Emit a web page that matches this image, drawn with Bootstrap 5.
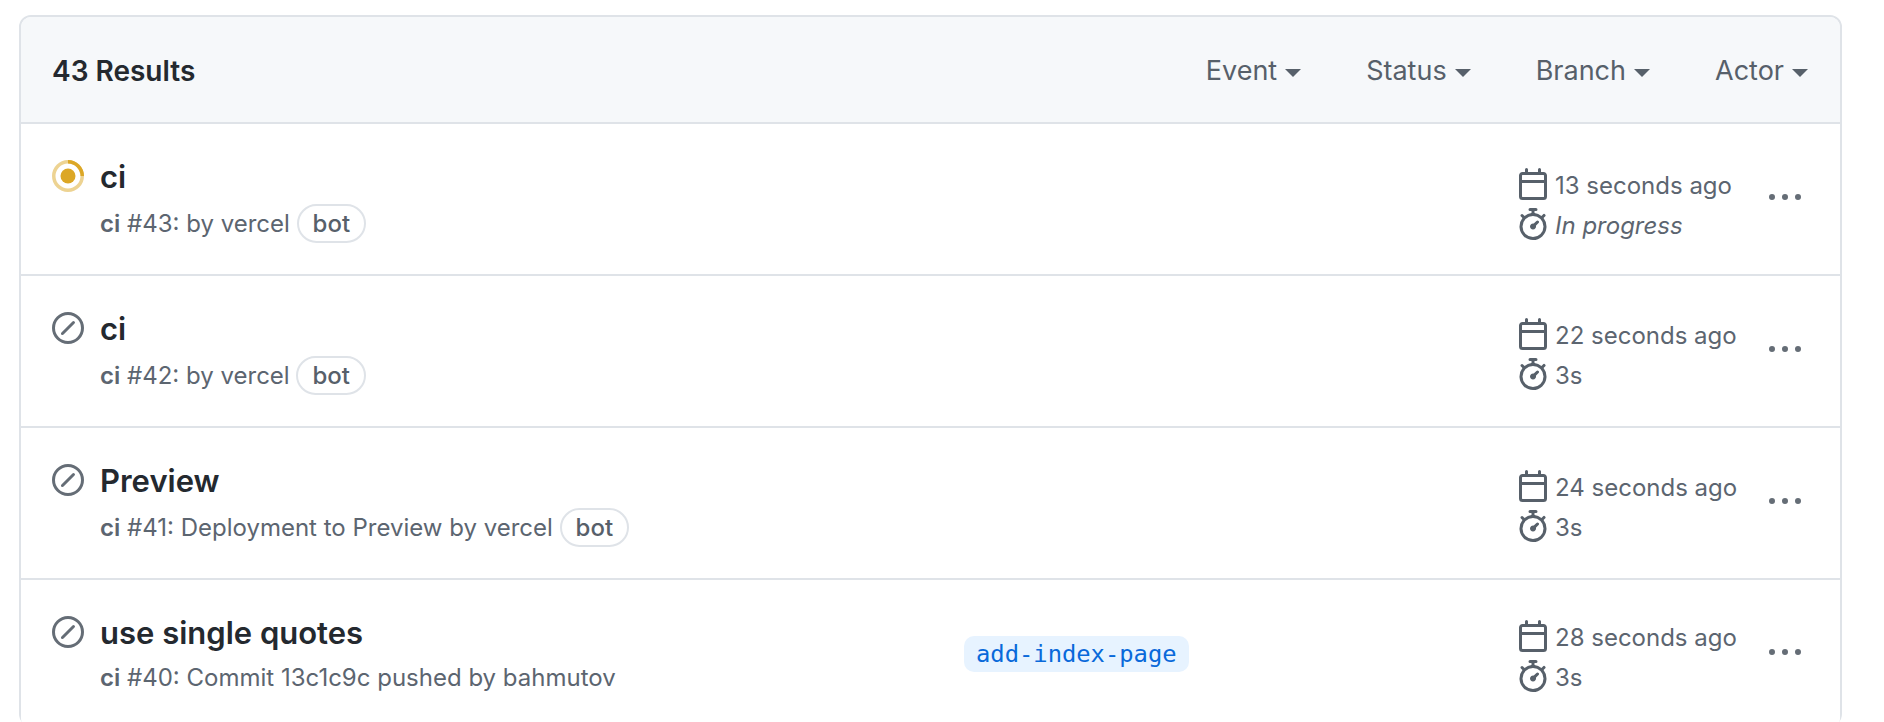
<!DOCTYPE html>
<html lang="en">
<head>
  <meta charset="UTF-8" />
  <title>Workflow runs</title>
  <link rel="stylesheet" href="https://cdn.jsdelivr.net/npm/bootstrap@5.3.0/dist/css/bootstrap.min.css"/>
  <style>
    body {
      background-color: #fff;
      font-family: Inter, "Liberation Sans", sans-serif;
      color: #24292f;
    }
    .runs-page {
      padding: 15px 42px 0 19px;
    }
    .runs-box {
      border: 2px solid #dfe3e8;
      border-radius: 12px;
    }
    .runs-head {
      height: 107px;
      padding: 3px 32px 0 31px;
      background-color: #f6f8fa;
      border-bottom: 2px solid #dfe3e8;
      border-radius: 10px 10px 0 0;
    }
    .runs-count {
      font-size: 28px;
      font-weight: 600;
    }
    .filter-list {
      gap: 65px;
    }
    .filter-item {
      font-size: 27px;
      color: #57606a;
      padding: 0;
      border: 0;
      background: none;
    }
    .filter-item::after {
      content: "";
      display: inline-block;
      margin-left: 8px;
      vertical-align: 3px;
      border-top: 8px solid #57606a;
      border-left: 8px solid transparent;
      border-right: 8px solid transparent;
    }
    .runs-box > .run-list {
      border-top: 0;
      --bs-list-group-border-width: 2px;
      --bs-list-group-border-color: #dfe3e8;
    }
    .run-row {
      padding: 28px 39px 20px 31px;
      min-height: 152px;
    }
    .run-row.no-tag {
      min-height: 144px;
    }
    .run-icon {
      width: 32px;
      height: 32px;
      flex: none;
      margin-top: 8px;
      fill: #656d76;
    }
    .run-main {
      flex: 1 1 0;
      margin-left: 16px;
    }
    .run-title {
      font-size: 31px;
      font-weight: 600;
      line-height: 50px;
      color: #24292f;
    }
    .run-sub {
      margin-top: 2px;
      font-size: 24px;
      line-height: 40px;
      color: #5c6570;
      white-space: nowrap;
    }
    .no-tag .run-sub {
      margin-top: 0;
    }
    .bot-tag {
      display: inline-block;
      margin-left: 0;
      padding: 0 14px;
      font-size: 24px;
      line-height: 35px;
      font-weight: 500;
      color: #57606a;
      border: 2px solid #dfe3e8;
      border-radius: 20px;
    }
    .branch-col {
      width: 553px;
      flex: none;
      margin-bottom: 4px;
    }
    .branch-tag {
      display: inline-block;
      font-family: "DejaVu Sans Mono", monospace;
      font-size: 23.8px;
      line-height: 36px;
      padding: 0 12px;
      color: #0969da;
      background-color: #e7f3ff;
      border-radius: 10px;
    }
    .time-col {
      width: 252px;
      flex: none;
      margin-top: 14px;
      font-size: 24px;
      color: #5c6570;
      gap: 8px;
    }
    .in-progress .time-col {
      margin-top: 16px;
    }
    .no-tag .time-col {
      margin-top: 12px;
    }
    .time-line {
      gap: 6px;
      height: 32px;
    }
    .time-line svg {
      width: 32px;
      height: 32px;
      fill: #57606a;
      flex: none;
    }
    .time-text {
      margin-top: 4px;
    }
    .kebab {
      width: 32px;
      height: 32px;
      margin-bottom: 11px;
      fill: #656d76;
      flex: none;
    }
    .no-tag .kebab {
      margin-bottom: 6px;
    }
  </style>
</head>
<body class="overflow-hidden">

<svg class="d-none">
  <symbol id="i-skip" viewBox="0 0 16 16"><path d="M8 0a8 8 0 1 1 0 16A8 8 0 0 1 8 0ZM1.5 8a6.5 6.5 0 1 0 13 0 6.5 6.5 0 0 0-13 0Zm9.78-2.22-5.5 5.5a.749.749 0 0 1-1.275-.326.749.749 0 0 1 .215-.734l5.5-5.5a.751.751 0 0 1 1.042.018.751.751 0 0 1 .018 1.042Z"/></symbol>
  <symbol id="i-cal" viewBox="0 0 16 16"><path d="M4.75 0a.75.75 0 0 1 .75.75V2h5V.75a.75.75 0 0 1 1.5 0V2h1.25c.966 0 1.75.784 1.75 1.75v10.5A1.75 1.75 0 0 1 13.25 16H2.75A1.75 1.75 0 0 1 1 14.25V3.75C1 2.784 1.784 2 2.75 2H4V.75A.75.75 0 0 1 4.75 0ZM2.5 7.5v6.75c0 .138.112.25.25.25h10.5a.25.25 0 0 0 .25-.25V7.5Zm10.75-4H2.75a.25.25 0 0 0-.25.25V6h11V3.75a.25.25 0 0 0-.25-.25Z"/></symbol>
  <symbol id="i-watch" viewBox="0 0 16 16"><path d="M5.75.75A.75.75 0 0 1 6.5 0h3a.75.75 0 0 1 0 1.5h-.75v1l-.001.041a6.724 6.724 0 0 1 3.464 1.435l.007-.006.75-.75a.75.75 0 1 1 1.06 1.06l-.75.75-.006.007a6.75 6.75 0 1 1-10.548 0L2.72 5.03l-.75-.75a.75.75 0 0 1 1.06-1.06l.75.75.007.006A6.72 6.72 0 0 1 7.25 2.541V1.5H6.5a.75.75 0 0 1-.75-.75ZM8 14.5a5.25 5.25 0 1 0-.001-10.501A5.25 5.25 0 0 0 8 14.5Zm.389-6.7 1.33-1.33a.75.75 0 1 1 1.061 1.06L9.45 8.861A1.503 1.503 0 0 1 8 10.75a1.499 1.499 0 1 1 .389-2.95Z"/></symbol>
  <symbol id="i-kebab" viewBox="0 0 16 16"><path d="M8 9a1.5 1.5 0 1 0 0-3 1.5 1.5 0 0 0 0 3ZM1.5 9a1.5 1.5 0 1 0 0-3 1.5 1.5 0 0 0 0 3Zm13 0a1.5 1.5 0 1 0 0-3 1.5 1.5 0 0 0 0 3Z"/></symbol>
</svg>

<div class="runs-page">
  <div class="card runs-box">
    <div class="runs-head d-flex align-items-center justify-content-between">
      <div class="runs-count">43 Results</div>
      <div class="filter-list d-flex">
        <button class="filter-item">Event</button>
        <button class="filter-item">Status</button>
        <button class="filter-item">Branch</button>
        <button class="filter-item">Actor</button>
      </div>
    </div>

    <div class="list-group list-group-flush run-list">
      <div class="list-group-item run-row in-progress d-flex align-items-start">
        <svg class="run-icon" viewBox="0 0 32 32">
          <circle cx="16" cy="16" r="14.25" fill="none" stroke="#dca726" stroke-opacity=".5" stroke-width="3.5"/>
          <path d="M16 1.75A14.25 14.25 0 0 1 30.25 16" fill="none" stroke="#dca726" stroke-width="3.5"/>
          <circle cx="16" cy="16" r="7.5" fill="#dca726"/>
        </svg>
        <div class="run-main">
          <div class="run-title">ci</div>
          <div class="run-sub"><b class="fw-semibold">ci</b> #43: by vercel <span class="bot-tag">bot</span></div>
        </div>
        <div class="branch-col"></div>
        <div class="time-col d-flex flex-column">
          <div class="time-line d-flex align-items-center"><svg><use href="#i-cal"/></svg><span class="time-text">13 seconds ago</span></div>
          <div class="time-line d-flex align-items-center"><svg><use href="#i-watch"/></svg><em class="time-text">In progress</em></div>
        </div>
        <svg class="kebab align-self-center"><use href="#i-kebab"/></svg>
      </div>

      <div class="list-group-item run-row d-flex align-items-start">
        <svg class="run-icon"><use href="#i-skip"/></svg>
        <div class="run-main">
          <div class="run-title">ci</div>
          <div class="run-sub"><b class="fw-semibold">ci</b> #42: by vercel <span class="bot-tag">bot</span></div>
        </div>
        <div class="branch-col"></div>
        <div class="time-col d-flex flex-column">
          <div class="time-line d-flex align-items-center"><svg><use href="#i-cal"/></svg><span class="time-text">22 seconds ago</span></div>
          <div class="time-line d-flex align-items-center"><svg><use href="#i-watch"/></svg><span class="time-text">3s</span></div>
        </div>
        <svg class="kebab align-self-center"><use href="#i-kebab"/></svg>
      </div>

      <div class="list-group-item run-row d-flex align-items-start">
        <svg class="run-icon"><use href="#i-skip"/></svg>
        <div class="run-main">
          <div class="run-title">Preview</div>
          <div class="run-sub"><b class="fw-semibold">ci</b> #41: Deployment to Preview by vercel <span class="bot-tag">bot</span></div>
        </div>
        <div class="branch-col"></div>
        <div class="time-col d-flex flex-column">
          <div class="time-line d-flex align-items-center"><svg><use href="#i-cal"/></svg><span class="time-text">24 seconds ago</span></div>
          <div class="time-line d-flex align-items-center"><svg><use href="#i-watch"/></svg><span class="time-text">3s</span></div>
        </div>
        <svg class="kebab align-self-center"><use href="#i-kebab"/></svg>
      </div>

      <div class="list-group-item run-row no-tag d-flex align-items-start">
        <svg class="run-icon"><use href="#i-skip"/></svg>
        <div class="run-main">
          <div class="run-title">use single quotes</div>
          <div class="run-sub"><b class="fw-semibold">ci</b> #40: Commit 13c1c9c pushed by bahmutov</div>
        </div>
        <div class="branch-col align-self-center"><span class="branch-tag">add-index-page</span></div>
        <div class="time-col d-flex flex-column">
          <div class="time-line d-flex align-items-center"><svg><use href="#i-cal"/></svg><span class="time-text">28 seconds ago</span></div>
          <div class="time-line d-flex align-items-center"><svg><use href="#i-watch"/></svg><span class="time-text">3s</span></div>
        </div>
        <svg class="kebab align-self-center"><use href="#i-kebab"/></svg>
      </div>
    </div>
  </div>
</div>

</body>
</html>
